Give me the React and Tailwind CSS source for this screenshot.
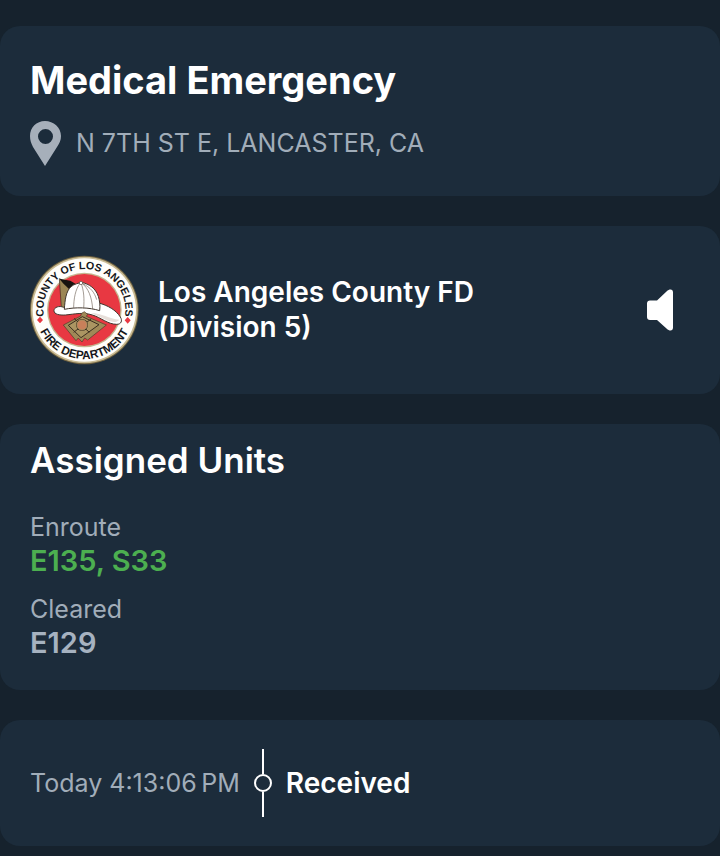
function Card({ className = "", children }) {
  return <section className={`rounded-[20px] bg-[#1c2c3b] px-[30px] ${className}`}>{children}</section>;
}

function PinIcon() {
  return (
    <svg className="h-[46px] w-8 shrink-0" viewBox="0 0 32 46" aria-hidden="true">
      <path
        fill="#a6afba"
        fillRule="evenodd"
        d="M15 1C6.500 1 0 7.500 0 16c0 4 1.200 7.500 3 11l12 19 12-19c2.500-3.500 4-7 4-11C31 7.500 23.500 1 15 1Zm.5 8a7.500 7.500 0 1 1 0 15 7.500 7.500 0 0 1 0-15Z"
      />
    </svg>
  );
}

function SpeakerIcon() {
  return (
    <svg className="h-[42px] w-[27px]" viewBox="0 0 27 42" aria-hidden="true">
      <path
        fill="#fff"
        d="M3 11.500h7L19.500 2.500C21 1 22.300.5 23.500.5c1.600 0 2.500 1.300 2.500 3v35c0 1.700-.9 3-2.500 3-1.200 0-2.500-.5-4-2L10 31H3c-1.800 0-3-1.200-3-3V14.500c0-1.800 1.200-3 3-3Z"
      />
    </svg>
  );
}

function Seal() {
  return (
    <svg
      className="size-[110px] shrink-0"
      viewBox="31 28 330 330"
      role="img"
      aria-label="County of Los Angeles Fire Department seal"
    >
      <defs>
        <path id="seal-top" d="M194 316a123 123 0 0 1 0-246a123 123 0 0 1 0 246" />
        <path id="seal-bottom" d="M47 193a147 147 0 0 0 294 0" />
      </defs>
      <circle cx="194" cy="193" r="163" fill="#6f6240" />
      <circle cx="194" cy="193" r="160" fill="#c9bb93" />
      <circle cx="194" cy="193" r="155" fill="#fffefa" />
      <circle cx="194" cy="193" r="112" fill="#c4b68f" />
      <circle cx="194" cy="193" r="108" fill="#e83842" />
      <g fill="#15171b" fontFamily="'Liberation Sans', Arial, sans-serif" fontWeight="700" textAnchor="middle">
        <text fontSize="32">
          <textPath href="#seal-top" startOffset="50%">COUNTY OF LOS ANGELES</textPath>
        </text>
        <text fontSize="35">
          <textPath href="#seal-bottom" startOffset="50%">FIRE DEPARTMENT</textPath>
        </text>
      </g>
      <path d="m61 213 9 10-9 10-9-10ZM324 214l9 10-9 10-9-10Z" fill="#e83842" />
      <path d="m119 99 35 16-17 76-12-7Z" fill="#9b8654" stroke="#3b2f20" strokeWidth="2" />
      <path d="m119 99 33 6 15 9-19 16-18-17Z" fill="#17130f" />
      <path
        d="M132 185c-14-6-29 0-29 10 0 11 16 14 34 13 30-3 53-9 81 0 25 7 46 28 73 28 14 0 18-11 11-22-13-21-38-35-65-42Z"
        fill="#fff"
        stroke="#41372f"
        strokeWidth="3"
      />
      <path d="M215 202c31 0 53 18 84 20-12 15-35 3-51-4-14-7-23-11-33-16Z" fill="#e7dfda" />
      <path
        d="M134 191c2-29 5-54 20-68 11-9 23-10 31-13 24 5 43 18 51 42 4 13 6 27 4 43-31-10-72-11-106-4Z"
        fill="#fff"
        stroke="#41372f"
        strokeWidth="3"
      />
      <path
        d="M182 112c-15 18-20 48-20 76m22-76c9 23 10 48 8 76m-6-76c20 15 31 43 33 79m-31-78c25 13 36 26 43 49"
        fill="none"
        stroke="#75695f"
        strokeWidth="2"
      />
      <circle cx="184" cy="112" r="5" fill="#fff" stroke="#57493c" strokeWidth="2" />
      <path
        d="m186 203 8-5 10 8-4 6 60 26-56 45-9-6-8 12-11-12-7 8-38-47 52-27Z"
        fill="#a08957"
        stroke="#4a3b28"
        strokeWidth="2"
        strokeLinejoin="round"
      />
      <path d="m188 213 50 24-54 39-38-37Z" fill="#ab9562" stroke="#3b2f20" strokeWidth="3" />
      <path d="m163 218 46 42M214 220l-52 40" stroke="#3b2f20" strokeWidth="3" />
      <circle cx="187" cy="238" r="18" fill="#3b2f20" />
      <circle cx="187" cy="238" r="15" fill="#c9805a" stroke="#b09562" strokeWidth="3" />
    </svg>
  );
}

function UnitGroup({ label, units, color }) {
  return (
    <div>
      <dt className="text-[25px] leading-[34px] text-[#a1adb9]">{label}</dt>
      <dd className={`text-[29px] leading-[34px] font-semibold ${color}`}>{units}</dd>
    </div>
  );
}

export default function App() {
  return (
    <main className="flex min-h-screen flex-col gap-[30px] bg-[#16222d] pt-[26px] pb-[11px] font-['Inter','Liberation_Sans',sans-serif] text-white">
      <Card className="pt-[30px] pb-[30px]">
        <h1 className="text-[38px] leading-[48px] font-bold">Medical Emergency</h1>
        <div className="mt-4 flex items-center gap-[14px]">
          <PinIcon />
          <p className="text-[25px] leading-8 text-[#a1adb9]">N 7TH ST E, LANCASTER, CA</p>
        </div>
      </Card>

      <Card className="flex items-center py-[29px]">
        <Seal />
        <h2 className="ml-[18px] max-w-[340px] text-[28px] leading-[35px] font-semibold">
          Los Angeles County FD (Division 5)
        </h2>
        <button type="button" aria-label="Play audio" className="mr-4 ml-auto">
          <SpeakerIcon />
        </button>
      </Card>

      <Card className="pt-3 pb-[30px]">
        <h2 className="text-[35px] leading-[48px] font-semibold">Assigned Units</h2>
        <dl className="mt-[26px] flex flex-col gap-[14px]">
          <UnitGroup label="Enroute" units="E135, S33" color="text-[#4caf50]" />
          <UnitGroup label="Cleared" units="E129" color="text-[#a6b2c0]" />
        </dl>
      </Card>

      <Card className="flex items-center py-[29px]">
        <time className="text-[25px] leading-8 text-[#a1adb9]">Today 4:13:06{"\u202f"}PM</time>
        <div className="mx-[14px] flex flex-col items-center" aria-hidden="true">
          <span className="h-[25px] w-[2px] bg-white" />
          <span className="size-[18px] rounded-full border-2 border-white" />
          <span className="h-[25px] w-[2px] bg-white" />
        </div>
        <p className="text-[28px] leading-8 font-semibold">Received</p>
      </Card>
    </main>
  );
}
